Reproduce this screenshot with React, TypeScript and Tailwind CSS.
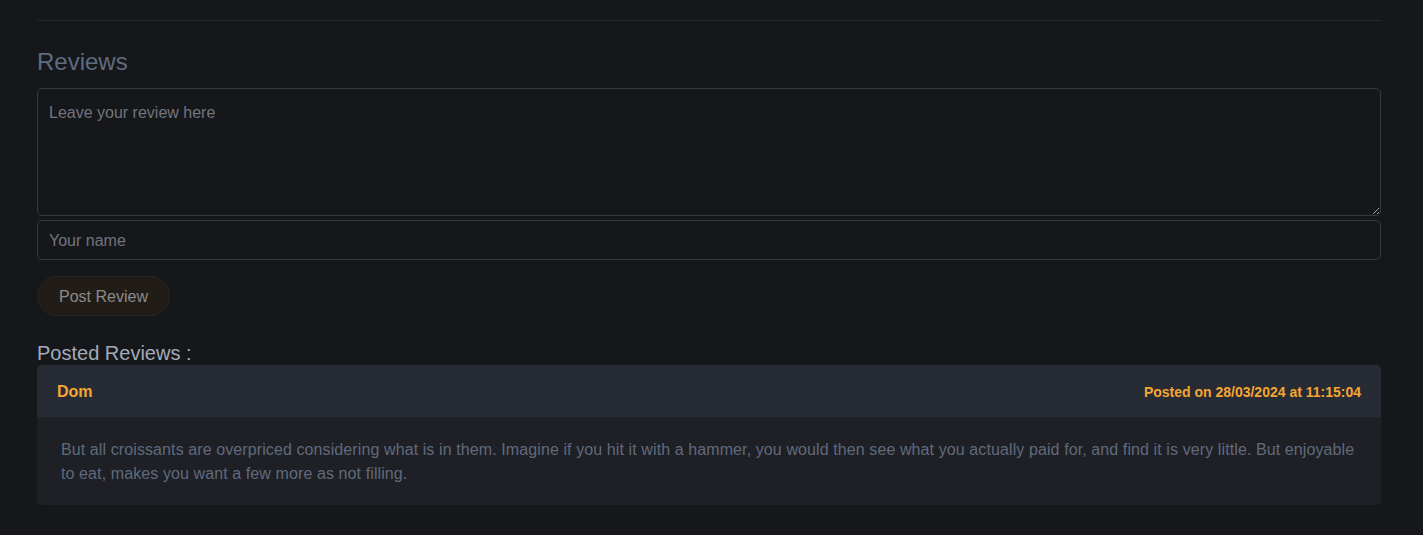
import React from "react";

export default function App() {
  return (
    <div
      className="min-h-[535px] w-full bg-[#16171b] pl-[37px] pr-[42px] pt-[20px] pb-[30px]"
      style={{ fontFamily: '"Liberation Sans", Arial, Helvetica, sans-serif' }}
    >
      <div className="border-t border-[#24262c]" />
      <h2 className="mt-[27px] text-[24px] leading-[28px] text-[#5f6b80]">Reviews</h2>
      <div className="mt-[12px] flex flex-col gap-[4px]">
        <textarea
          placeholder="Leave your review here"
          className="block h-[128px] w-full rounded-[5px] border border-[#363a44] bg-[#16171b] px-[11px] py-[12px] text-[16px] leading-[24px] text-[#9aa0a8] placeholder:text-[#71757c] outline-none"
        />
        <input
          placeholder="Your name"
          className="block h-[40px] w-full rounded-[5px] border border-[#363a44] bg-[#16171b] px-[11px] pt-[2px] text-[16px] text-[#9aa0a8] placeholder:text-[#71757c] outline-none"
        />
      </div>
      <button className="mt-[16px] h-[40px] w-[133px] rounded-full border border-[#26262a] bg-[#211c16] pt-[2px] text-[16px] text-[#8b8b8b]">
        Post Review
      </button>
      <div className="mt-[25px] text-[20px] leading-[24px] text-[#a3abb9]">Posted Reviews :</div>
      <div className="overflow-hidden rounded-[5px] bg-[#1e2025]">
        <div className="flex h-[52px] items-center justify-between bg-[#272b34] px-[20px] pt-[2px]">
          <span className="text-[16px] font-bold text-[#f5a633]">Dom</span>
          <span className="text-[14px] font-bold text-[#f5a633]">Posted on 28/03/2024 at 11:15:04</span>
        </div>
        <div className="px-[24px] pt-[21px] pb-[19px] text-[16px] leading-[24px] tracking-[0.1px] text-[#606a7d]">
          But all croissants are overpriced considering what is in them. Imagine if you hit it with a hammer, you would then see what you actually paid for, and find it is very little. But enjoyable to eat, makes you want a few more as not filling.
        </div>
      </div>
    </div>
  );
}
